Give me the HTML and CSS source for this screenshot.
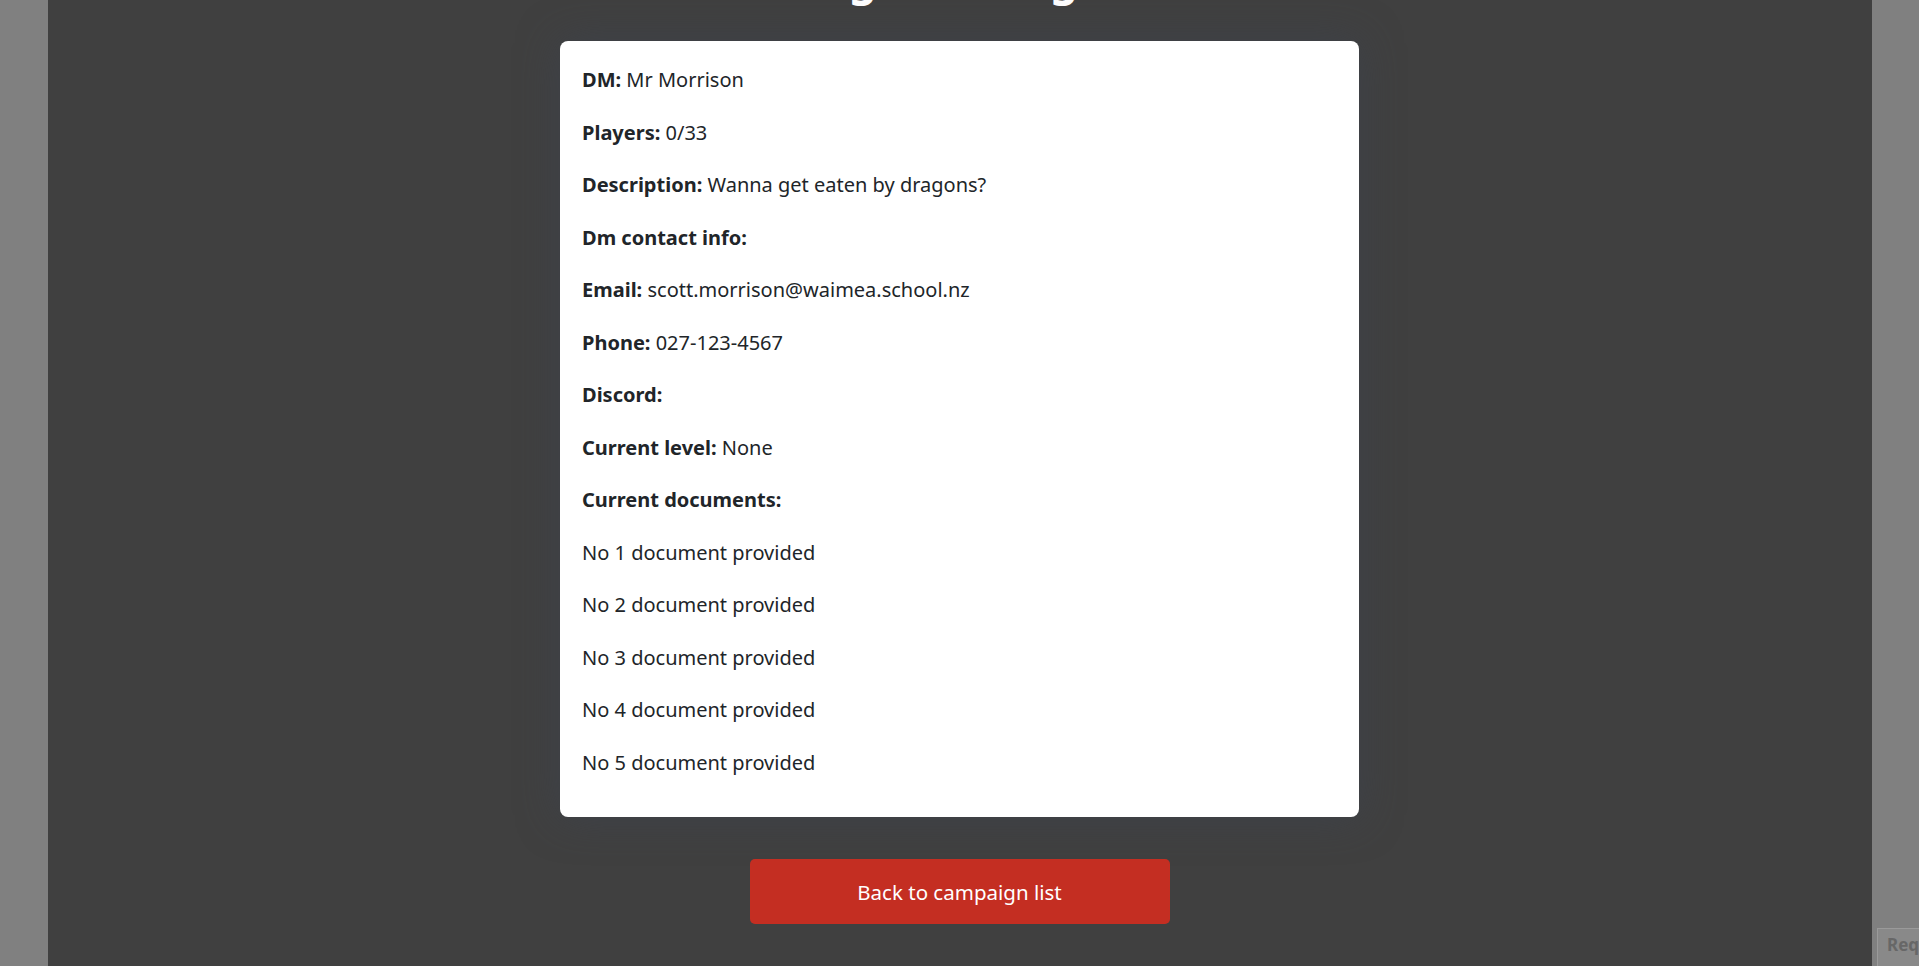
FILE: index.html
```html
<!DOCTYPE html>
<html lang="en">
<head>
<meta charset="utf-8">
<title>Campaign details</title>
<link rel="stylesheet" href="styles.css">
</head>
<body>
<div class="page">
  <main class="content">
    <h1 class="title">Dragon Rising</h1>
    <section class="card">
      <p><b>DM:</b> Mr Morrison</p>
      <p><b>Players:</b> 0/33</p>
      <p><b>Description:</b> Wanna get eaten by dragons?</p>
      <p><b>Dm contact info:</b></p>
      <p><b>Email:</b> scott.morrison@waimea.school.nz</p>
      <p><b>Phone:</b> 027-123-4567</p>
      <p><b>Discord:</b></p>
      <p><b>Current level:</b> None</p>
      <p><b>Current documents:</b></p>
      <p>No 1 document provided</p>
      <p>No 2 document provided</p>
      <p>No 3 document provided</p>
      <p>No 4 document provided</p>
      <p>No 5 document provided</p>
    </section>
    <a class="back-btn" href="#">Back to campaign list</a>
  </main>
</div>
<div class="req-tab">Request</div>
</body>
</html>
```

FILE: styles.css
```css
html, body {
  margin: 0;
  padding: 0;
  height: 100%;
  overflow: hidden;
}
body {
  background: #808080;
  font-family: "Noto Sans", "Open Sans", sans-serif;
  color: #212529;
}
.page {
  width: 1824px;
  height: 100%;
  margin: 0 auto;
  background: #404040;
}
.content {
  display: flex;
  flex-direction: column;
  align-items: center;
}
.title {
  margin: -46px 0 0;
  height: 49px;
  padding-right: 70px;
  font-size: 44px;
  line-height: 49px;
  color: #ffffff;
  font-weight: 700;
}
.card {
  box-sizing: border-box;
  width: 799px;
  margin-top: 38px;
  padding: 23px 22px 18px;
  background: #ffffff;
  border-radius: 8px;
  box-shadow: 0 0 40px rgba(60, 66, 80, 0.6);
}
.card p {
  margin: 0 0 21px;
  font-size: 20px;
  line-height: 31.5px;
}
.card b {
  font-weight: 700;
}
.back-btn {
  box-sizing: border-box;
  width: 420px;
  height: 65px;
  margin-top: 42px;
  display: flex;
  align-items: center;
  justify-content: center;
  background: #c42e22;
  color: #ffffff;
  border-radius: 5px;
  text-decoration: none;
  font-size: 20.5px;
}
.req-tab {
  position: fixed;
  left: 1877px;
  top: 928px;
  width: 120px;
  height: 60px;
  box-sizing: border-box;
  padding: 4px 0 0 9px;
  background: #898989;
  border: 1px solid #9a9a9a;
  color: #676767;
  font-weight: 700;
  font-size: 17px;
}
```
